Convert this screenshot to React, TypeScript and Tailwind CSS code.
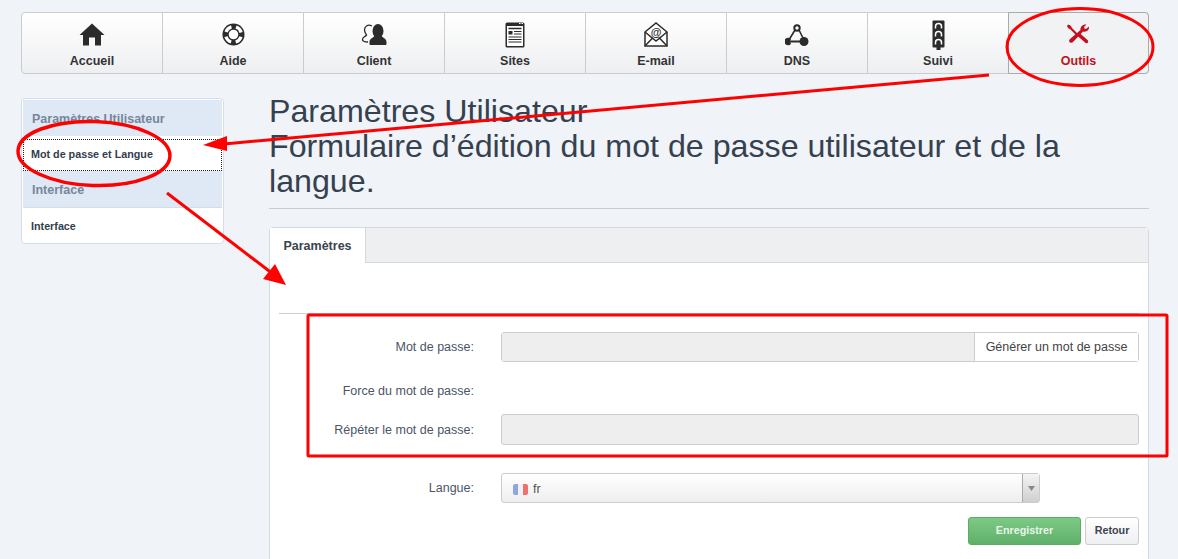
import React from 'react';

const tabs: { label: string; icon: React.ReactNode; active?: boolean }[] = [
  {
    label: 'Accueil',
    icon: (
      <svg width="26" height="23" viewBox="0 0 26 23" fill="#2b2b2b">
        <path d="M13 0.500 L25.500 12 L22 12 L22 22.500 L16 22.500 L16 14.500 L10 14.500 L10 22.500 L4 22.500 L4 12 L0.500 12 Z" />
      </svg>
    ),
  },
  {
    label: 'Aide',
    icon: (
      <svg width="23" height="23" viewBox="0 0 24 24">
        <circle cx="12" cy="12" r="11.500" fill="#2b2b2b" />
        <circle cx="12" cy="12" r="8.200" fill="none" stroke="#fff" strokeWidth="3.400" strokeDasharray="8 4.880" strokeDashoffset="-2.440" />
        <circle cx="12" cy="12" r="5" fill="#fff" />
      </svg>
    ),
  },
  {
    label: 'Client',
    icon: (
      <svg width="26" height="21" viewBox="0 0 26 21">
        <path d="M11 2 C7 0 3.500 2 3.500 6 C3.500 8.500 5 10 5.500 11 C4 13 1.500 13 1.500 15.500 C1.500 17.500 4 18 7 18" fill="none" stroke="#2b2b2b" strokeWidth="1.300" />
        <ellipse cx="17" cy="7" rx="5.500" ry="7" fill="#2b2b2b" />
        <path d="M14 11 L20 11 C21 14 25.500 14 25.500 18 L25.500 20 C25.500 20.500 25 21 24.500 21 L9.500 21 C9 21 8.500 20.500 8.500 20 L8.500 18 C8.500 14 13 14 14 11 Z" fill="#2b2b2b" />
      </svg>
    ),
  },
  {
    label: 'Sites',
    icon: (
      <svg width="20" height="26" viewBox="0 0 20 26">
        <rect x="0.500" y="0.500" width="19" height="25" rx="1.500" fill="#2b2b2b" />
        <rect x="2" y="4" width="16" height="20" fill="#fff" />
        <path d="M14 1.500h1.500M16.500 1.500h1.500" stroke="#fff" strokeWidth="1" />
        <path d="M3.500 6.500h13" stroke="#2b2b2b" strokeWidth="1.500" />
        <rect x="3.500" y="9" width="4" height="3.500" fill="#2b2b2b" />
        <path d="M9 9.500h7.500M9 12h7.500M3.500 15h13M3.500 17.500h13M3.500 20h13" stroke="#2b2b2b" strokeWidth="1" />
      </svg>
    ),
  },
  {
    label: 'E-mail',
    icon: (
      <svg width="24" height="25" viewBox="0 0 24 25" fill="none" stroke="#2b2b2b">
        <path d="M1 10 L12 1 L23 10 L23 24 L1 24 Z" fill="#fff" strokeWidth="1.500" />
        <path d="M1 24 L9 15.500 M23 24 L15 15.500 M1 10 L12 19 L23 10" strokeWidth="1.500" />
        <text x="12" y="14" textAnchor="middle" fontSize="11" fontWeight="700" fill="#2b2b2b" stroke="none" fontFamily="Liberation Sans">@</text>
      </svg>
    ),
  },
  {
    label: 'DNS',
    icon: (
      <svg width="24" height="22" viewBox="0 0 24 22">
        <path d="M10 6 L4.500 15 M14 6 L18.500 15" fill="none" stroke="#2b2b2b" strokeWidth="1.600" />
        <circle cx="12" cy="4" r="2.700" fill="#fff" stroke="#2b2b2b" strokeWidth="2" />
        <path d="M6 15 A3.800 3.800 0 1 0 6 20 L5 17.500 Z" fill="#2b2b2b" />
        <path d="M4 17.500 L15 17.500" stroke="#2b2b2b" strokeWidth="2" />
        <circle cx="19" cy="17.500" r="4.500" fill="#2b2b2b" />
      </svg>
    ),
  },
  {
    label: 'Suivi',
    icon: (
      <svg width="13" height="30" viewBox="0 0 13 30">
        <rect x="0.500" y="0.500" width="12" height="27" rx="1" fill="#2b2b2b" />
        <rect x="4.500" y="27" width="4" height="3" fill="#2b2b2b" />
        <path d="M3.500 8.500 V6.500 A3 3 0 0 1 9.500 6.500 V8.500" fill="none" stroke="#fff" strokeWidth="1.500" />
        <path d="M3.500 16.500 V14.500 A3 3 0 0 1 9.500 14.500 V16.500" fill="none" stroke="#fff" strokeWidth="1.500" />
        <path d="M3.500 24.500 V22.500 A3 3 0 0 1 9.500 22.500 V24.500" fill="none" stroke="#fff" strokeWidth="1.500" />
      </svg>
    ),
  },
  {
    label: 'Outils',
    active: true,
    icon: (
      <svg width="23" height="21" viewBox="0 0 23 21" fill="#c4101c">
        <path d="M1 0.500 L3.500 1.500 L5 4 L11 10 L9.500 11.500 L3.500 5.500 L1 4 L0 2 Z" />
        <path d="M12 8.500 L20.500 16 C22.500 18 20 20.500 18 18.500 L9.500 11 Z" />
        <path d="M19.500 0.500 L17 3 L17.500 4.500 L19 5 L22 2.500 C22.500 6 19.500 8.500 16 7.500 L6.500 17.500 C4 20.500 0.500 17.500 3 15 L13.500 6 C13 2.500 16 0 19.500 0.500 Z" />
      </svg>
    ),
  },
];

function Annotations() {
  return (
    <svg className="absolute left-0 top-0 pointer-events-none" width="1178" height="559" viewBox="0 0 1178 559" fill="none">
      <ellipse cx="1080" cy="47" rx="73" ry="38.500" stroke="#fe0000" strokeWidth="3" />
      <ellipse cx="94" cy="153.500" rx="76" ry="32" stroke="#fe0000" strokeWidth="3.500" transform="rotate(2 94 153)" />
      <rect x="308" y="315" width="859" height="141" rx="1" stroke="#fe0000" strokeWidth="3" />
      <path d="M989 75 L224 144" stroke="#fe0000" strokeWidth="3" />
      <path d="M203 145 L227 136 L227 151 Z" fill="#fe0000" />
      <path d="M167 193 L273 274" stroke="#fe0000" strokeWidth="3" />
      <path d="M286 285 L263 279 L275 264 Z" fill="#fe0000" />
    </svg>
  );
}

export default function App() {
  return (
    <div className="relative h-[559px] w-[1178px] overflow-hidden bg-[#f0f3f7] pl-[21px] pr-[29px] pt-[12px] text-[#333] font-['Liberation_Sans',Arial,sans-serif]">
      <nav className="flex h-[62px] rounded-[4px] border border-[#cccccc] bg-gradient-to-b from-white to-[#eeeff1]">
        {tabs.map((t, i) => (
          <div
            key={t.label}
            className={`flex flex-col items-center ${i === 0 ? 'w-[140px]' : t.active ? 'flex-1 border border-[#aaa] -my-px -mr-px rounded-r-[4px] bg-[#f1f2f4]' : 'w-[141px] border-l border-[#cccccc]'}`}
          >
            <div className="flex h-[39px] items-center justify-center pt-[4px]">{t.icon}</div>
            <span className={`mt-px text-[12.500px] font-bold leading-[16px] ${t.active ? 'text-[#c4101c]' : 'text-[#333]'}`}>{t.label}</span>
          </div>
        ))}
      </nav>

      <div className="mt-[24px] flex gap-[45px]">
        <aside className="h-[146px] w-[203px] shrink-0 rounded-[4px] border border-[#d4dde9] bg-white p-px">
          <div className="flex h-[36px] items-center bg-[#dfe8f5] pl-[9px] pt-[2px] text-[12.500px] font-bold text-[#75879b]">Paramètres Utilisateur</div>
          <div className="mt-[3px] flex h-[32px] items-center border border-dotted border-[#222] pb-[2px] pl-[7px] text-[10.750px] font-bold text-[#333d4d]">Mot de passe et Langue</div>
          <div className="flex h-[37px] items-center border-b border-[#d4dde9] bg-[#dfe8f5] pl-[9px] pt-[2px] text-[12.500px] font-bold text-[#75879b]">Interface</div>
          <div className="mt-[1px] flex h-[34px] items-center pl-[8px] text-[10.750px] font-bold text-[#333d4d]">Interface</div>
        </aside>

        <main className="min-w-0 flex-1">
          <h1 className="-mt-[4px] border-b border-[#cccccc] pb-[9px] text-[32.200px] font-normal leading-[35px] text-[#35414f]">
            Paramètres Utilisateur
            <br />
            Formulaire d’édition du mot de passe utilisateur et de la langue.
          </h1>

          <section className="mt-[18px] h-[400px] rounded-t-[4px] border border-[#d5d8dc] bg-white">
            <div className="flex h-[35px] bg-[#eeeff1] border-b border-[#d5d8dc]">
              <div className="-mb-px flex w-[96px] items-center justify-center border-r border-[#d5d8dc] bg-white pt-px text-[12.500px] font-bold text-[#3a4450]">Paramètres</div>
            </div>
            <div className="px-[9px]">
              <div className="mt-[50px] border-t border-[#cccccc]" />
              <div className="mt-[18px] flex items-center">
                <label className="w-[195px] text-right text-[12.500px] text-[#4a5568]">Mot de passe:</label>
                <div className="ml-[27px] flex h-[30px] flex-1 rounded-[3px] border border-[#cccccc]">
                  <div className="flex-1 bg-[#eeeeee]" />
                  <div className="flex w-[164px] items-center justify-center border-l border-[#cccccc] bg-white text-[12.500px] text-[#444]">Générer un mot de passe</div>
                </div>
              </div>
              <div className="mt-[21px] flex items-center">
                <label className="w-[195px] text-right text-[12.500px] leading-[16px] text-[#4a5568]">Force du mot de passe:</label>
              </div>
              <div className="mt-[15px] flex items-center">
                <label className="w-[195px] pt-px text-right text-[12.500px] text-[#4a5568]">Répéter le mot de passe:</label>
                <div className="ml-[27px] h-[31px] flex-1 rounded-[3px] border border-[#cccccc] bg-[#eeeeee]" />
              </div>
              <div className="mt-[28px] flex items-center">
                <label className="w-[195px] text-right text-[12.500px] text-[#4a5568]">Langue:</label>
                <div className="ml-[27px] flex h-[30px] w-[539px] rounded-[3px] border border-[#cccccc] bg-gradient-to-b from-white to-[#eeeeee]">
                  <div className="flex flex-1 items-center pl-[11px] pt-[2px] text-[12.500px] text-[#555]">
                    <svg width="15" height="11" viewBox="0 0 15 11" className="mr-[5px] rounded-[2px]">
                      <rect width="5" height="11" fill="#8fa8dc" />
                      <rect x="5" width="5" height="11" fill="#f0f0f5" />
                      <rect x="10" width="5" height="11" fill="#ee7070" />
                    </svg>
                    fr
                  </div>
                  <div className="flex w-[17px] items-center justify-center border-l border-[#aaaaaa] bg-gradient-to-b from-[#f4f4f4] to-[#cfcfcf]">
                    <svg width="7" height="5" viewBox="0 0 7 5"><path d="M0 0 H7 L3.500 5 Z" fill="#888" /></svg>
                  </div>
                </div>
              </div>
              <div className="mt-[14px] flex justify-end gap-[4px]">
                <button className="h-[28px] w-[113px] rounded-[3px] border border-[#5cac66] bg-gradient-to-b from-[#7dc986] to-[#5fb06a] pb-px text-[10.750px] font-bold text-[#e8f6e8]">Enregistrer</button>
                <button className="h-[28px] w-[54px] rounded-[3px] border border-[#cccccc] bg-gradient-to-b from-white to-[#eeeff1] pb-px text-[10.750px] font-bold text-[#3a4450]">Retour</button>
              </div>
            </div>
          </section>
        </main>
      </div>
      <Annotations />
    </div>
  );
}
